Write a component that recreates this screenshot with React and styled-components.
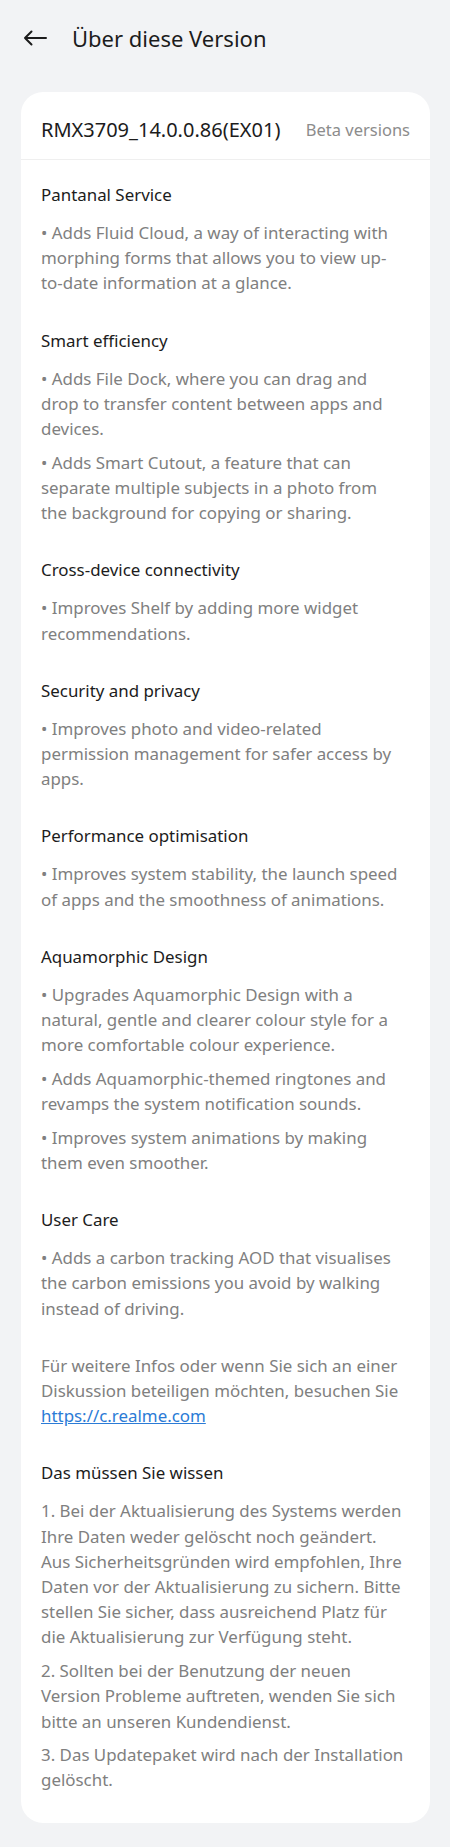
import React from 'react';
import styled, { createGlobalStyle } from 'styled-components';

const GlobalStyle = createGlobalStyle`
  html, body {
    margin: 0;
    padding: 0;
    background: #f2f3f5;
  }
  body {
    font-family: "Noto Sans", Lato, sans-serif;
    -webkit-font-smoothing: antialiased;
  }
`

const Page = styled.div`
  width: 450px;
  min-height: 1847px;
  background: #f2f3f5;
  padding: 0 20px 24px 21px;
  box-sizing: border-box;
`
const Header = styled.header`
  height: 92px;
  display: flex;
  align-items: flex-start;
  padding-top: 23px;
  box-sizing: border-box;
  gap: 23px;
`
const BackButton = styled.button`
  width: 28px;
  height: 30px;
  padding: 0;
  border: none;
  background: transparent;
  display: flex;
  align-items: center;
  justify-content: center;
  cursor: pointer;
`
const Title = styled.h1`
  margin: 0;
  font-size: 22px;
  line-height: 30px;
  font-weight: 400;
  color: #1c1c1c;
`
const Card = styled.div`
  background: #fff;
  border-radius: 22px;
  padding: 0 23px 30px 20px;
`
const VersionRow = styled.div`
  display: flex;
  align-items: center;
  justify-content: space-between;
  padding: 26px 20px 17px 20px;
  margin: 0 -23px 0 -20px;
  border-bottom: 1px solid #efefef;
`
const VersionName = styled.span`
  font-size: 20px;
  line-height: 24px;
  color: #1c1c1c;
`
const VersionTag = styled.span`
  font-size: 16.5px;
  line-height: 24px;
  color: #8c8c8c;
`
const Notes = styled.div`
  padding-top: 22px;
`
const Section = styled.section`
  margin-top: ${p => (p.$first ? '0' : '32px')};
`
const Heading = styled.h2`
  margin: 0 0 13px 0;
  font-size: 16.9px;
  line-height: 25px;
  font-weight: 400;
  color: #1c1c1c;
`
const Para = styled.p`
  margin: 0;
  font-size: 16.9px;
  line-height: 25.2px;
  color: #808080;
  & + & {
    margin-top: 8.5px;
  }
`
const Link = styled.a`
  color: #2b7bd6;
  text-decoration: underline;
`

const sections = [
  {
    title: 'Pantanal Service',
    items: ['• Adds Fluid Cloud, a way of interacting with morphing forms that allows you to view up-to-date information at a glance.']
  },
  {
    title: 'Smart efficiency',
    items: [
      '• Adds File Dock, where you can drag and drop to transfer content between apps and devices.',
      '• Adds Smart Cutout, a feature that can separate multiple subjects in a photo from the background for copying or sharing.'
    ]
  },
  {
    title: 'Cross-device connectivity',
    items: ['• Improves Shelf by adding more widget recommendations.']
  },
  {
    title: 'Security and privacy',
    items: ['• Improves photo and video-related permission management for safer access by apps.']
  },
  {
    title: 'Performance optimisation',
    items: ['• Improves system stability, the launch speed of apps and the smoothness of animations.']
  },
  {
    title: 'Aquamorphic Design',
    items: [
      '• Upgrades Aquamorphic Design with a natural, gentle and clearer colour style for a more comfortable colour experience.',
      '• Adds Aquamorphic-themed ringtones and revamps the system notification sounds.',
      '• Improves system animations by making them even smoother.'
    ]
  },
  {
    title: 'User Care',
    items: ['• Adds a carbon tracking AOD that visualises the carbon emissions you avoid by walking instead of driving.']
  }
];

const notices = [
  '1. Bei der Aktualisierung des Systems werden Ihre Daten weder gelöscht noch geändert. Aus Sicherheitsgründen wird empfohlen, Ihre Daten vor der Aktualisierung zu sichern. Bitte stellen Sie sicher, dass ausreichend Platz für die Aktualisierung zur Verfügung steht.',
  '2. Sollten bei der Benutzung der neuen Version Probleme auftreten, wenden Sie sich bitte an unseren Kundendienst.',
  '3. Das Updatepaket wird nach der Installation gelöscht.'
];

const BackArrow = () => (
  <svg width="24" height="20" viewBox="0 0 24 20" fill="none">
    <path d="M23 10H2M8.5 3.5L2 10l6.5 6.5" stroke="#1c1c1c" strokeWidth="2" strokeLinecap="round" strokeLinejoin="round" />
  </svg>
);

const App = () => {
  return (
    <>
      <GlobalStyle />
      <Page>
        <Header>
          <BackButton aria-label="Zurück"><BackArrow /></BackButton>
          <Title>Über diese Version</Title>
        </Header>

        <Card>
          <VersionRow>
            <VersionName>RMX3709_14.0.0.86(EX01)</VersionName>
            <VersionTag>Beta versions</VersionTag>
          </VersionRow>

          <Notes>
            { sections.map( (s, i) => (
              <Section key={s.title} $first={i === 0}>
                <Heading>{s.title}</Heading>
                { s.items.map( t => <Para key={t}>{t}</Para> ) }
              </Section>
            ))}

            <Section>
              <Para>
                Für weitere Infos oder wenn Sie sich an einer Diskussion beteiligen möchten, besuchen Sie{' '}
                <Link href="#">https://c.realme.com</Link>
              </Para>
            </Section>

            <Section>
              <Heading>Das müssen Sie wissen</Heading>
              { notices.map( t => <Para key={t}>{t}</Para> ) }
            </Section>
          </Notes>
        </Card>
      </Page>
    </>
  );
}

export default App;
